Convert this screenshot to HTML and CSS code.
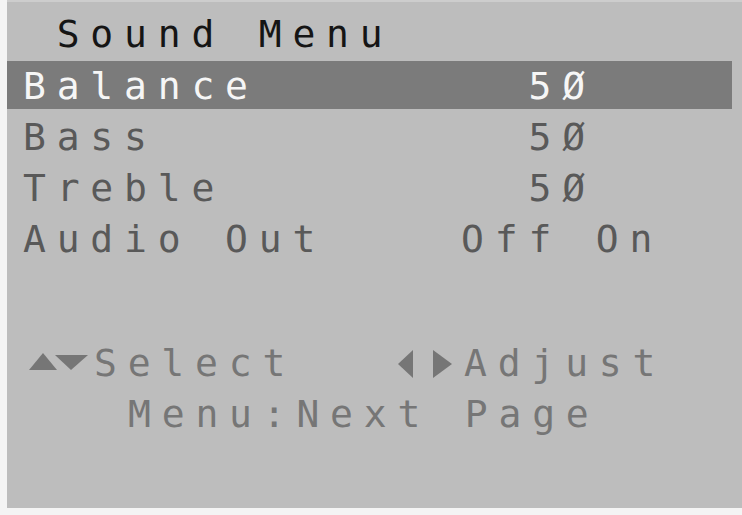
FILE: index.html
```html
<!DOCTYPE html>
<html lang="en">
  <head>
    <meta charset="UTF-8" />
    <meta name="viewport" content="width=device-width, initial-scale=1.0" />
    <title>Sound Menu</title>
    <link rel="stylesheet" href="styles.css">
  </head>
  <body>
    <div class="osd">
      <div class="title"> Sound Menu</div>

      <div class="items">
        <div class="row active"><span class="label">Balance</span><span class="val">5Ø</span></div>
        <div class="row"><span class="label">Bass</span><span class="val">5Ø</span></div>
        <div class="row"><span class="label">Treble</span><span class="val">5Ø</span></div>
        <div class="row toggle"><span class="label">Audio Out</span><span class="val">Off On</span></div>
      </div>

      <div class="help">
        <div class="line"><svg class="keys" width="67" height="51" viewBox="0 0 67 51"><polygon points="2,32 16,15 30,32" /><polygon points="28,17 61,17 44,32" /></svg>Select   <svg class="keys" width="67" height="51" viewBox="0 0 67 51"><polygon points="1,26 16,12 16,40" /><polygon points="36,12 55,26 36,40" /></svg>Adjust</div>
        <div class="line">   Menu:Next Page</div>
      </div>
    </div>
  </body>
</html>
```

FILE: styles.css
```css
body {
  margin: 0;
  background: #f4f4f4;
}
.osd {
  --cell: 33.7px;
  margin-left: 7px;
  height: 508px;
  background: #bdbdbd;
  border-top: 2px solid #cdcdcd;
  padding-top: 7px;
  box-sizing: border-box;
  font-family: "DejaVu Sans Mono", monospace;
  font-size: 38px;
  letter-spacing: 10.8px;
}
.title {
  white-space: pre;
  line-height: 51px;
  padding-left: 16px;
  color: #151515;
  margin-bottom: 1px;
}
.row {
  display: flex;
  height: 51px;
  line-height: 51px;
  padding-left: 16px;
  color: #595959;
}
.row.active {
  height: 48px;
  margin-bottom: 3px;
  margin-right: 10px;
  background: #7b7b7b;
  color: #f6f6f6;
}
.label,
.val {
  white-space: pre;
}
.label {
  width: calc(15 * var(--cell));
}
.row.toggle .label {
  width: calc(13 * var(--cell));
}
.help {
  margin-top: 73px;
  padding-left: 20px;
  color: #767676;
}
.line {
  white-space: pre;
  height: 51px;
  line-height: 51px;
}
.keys {
  vertical-align: top;
  fill: #767676;
}
```
